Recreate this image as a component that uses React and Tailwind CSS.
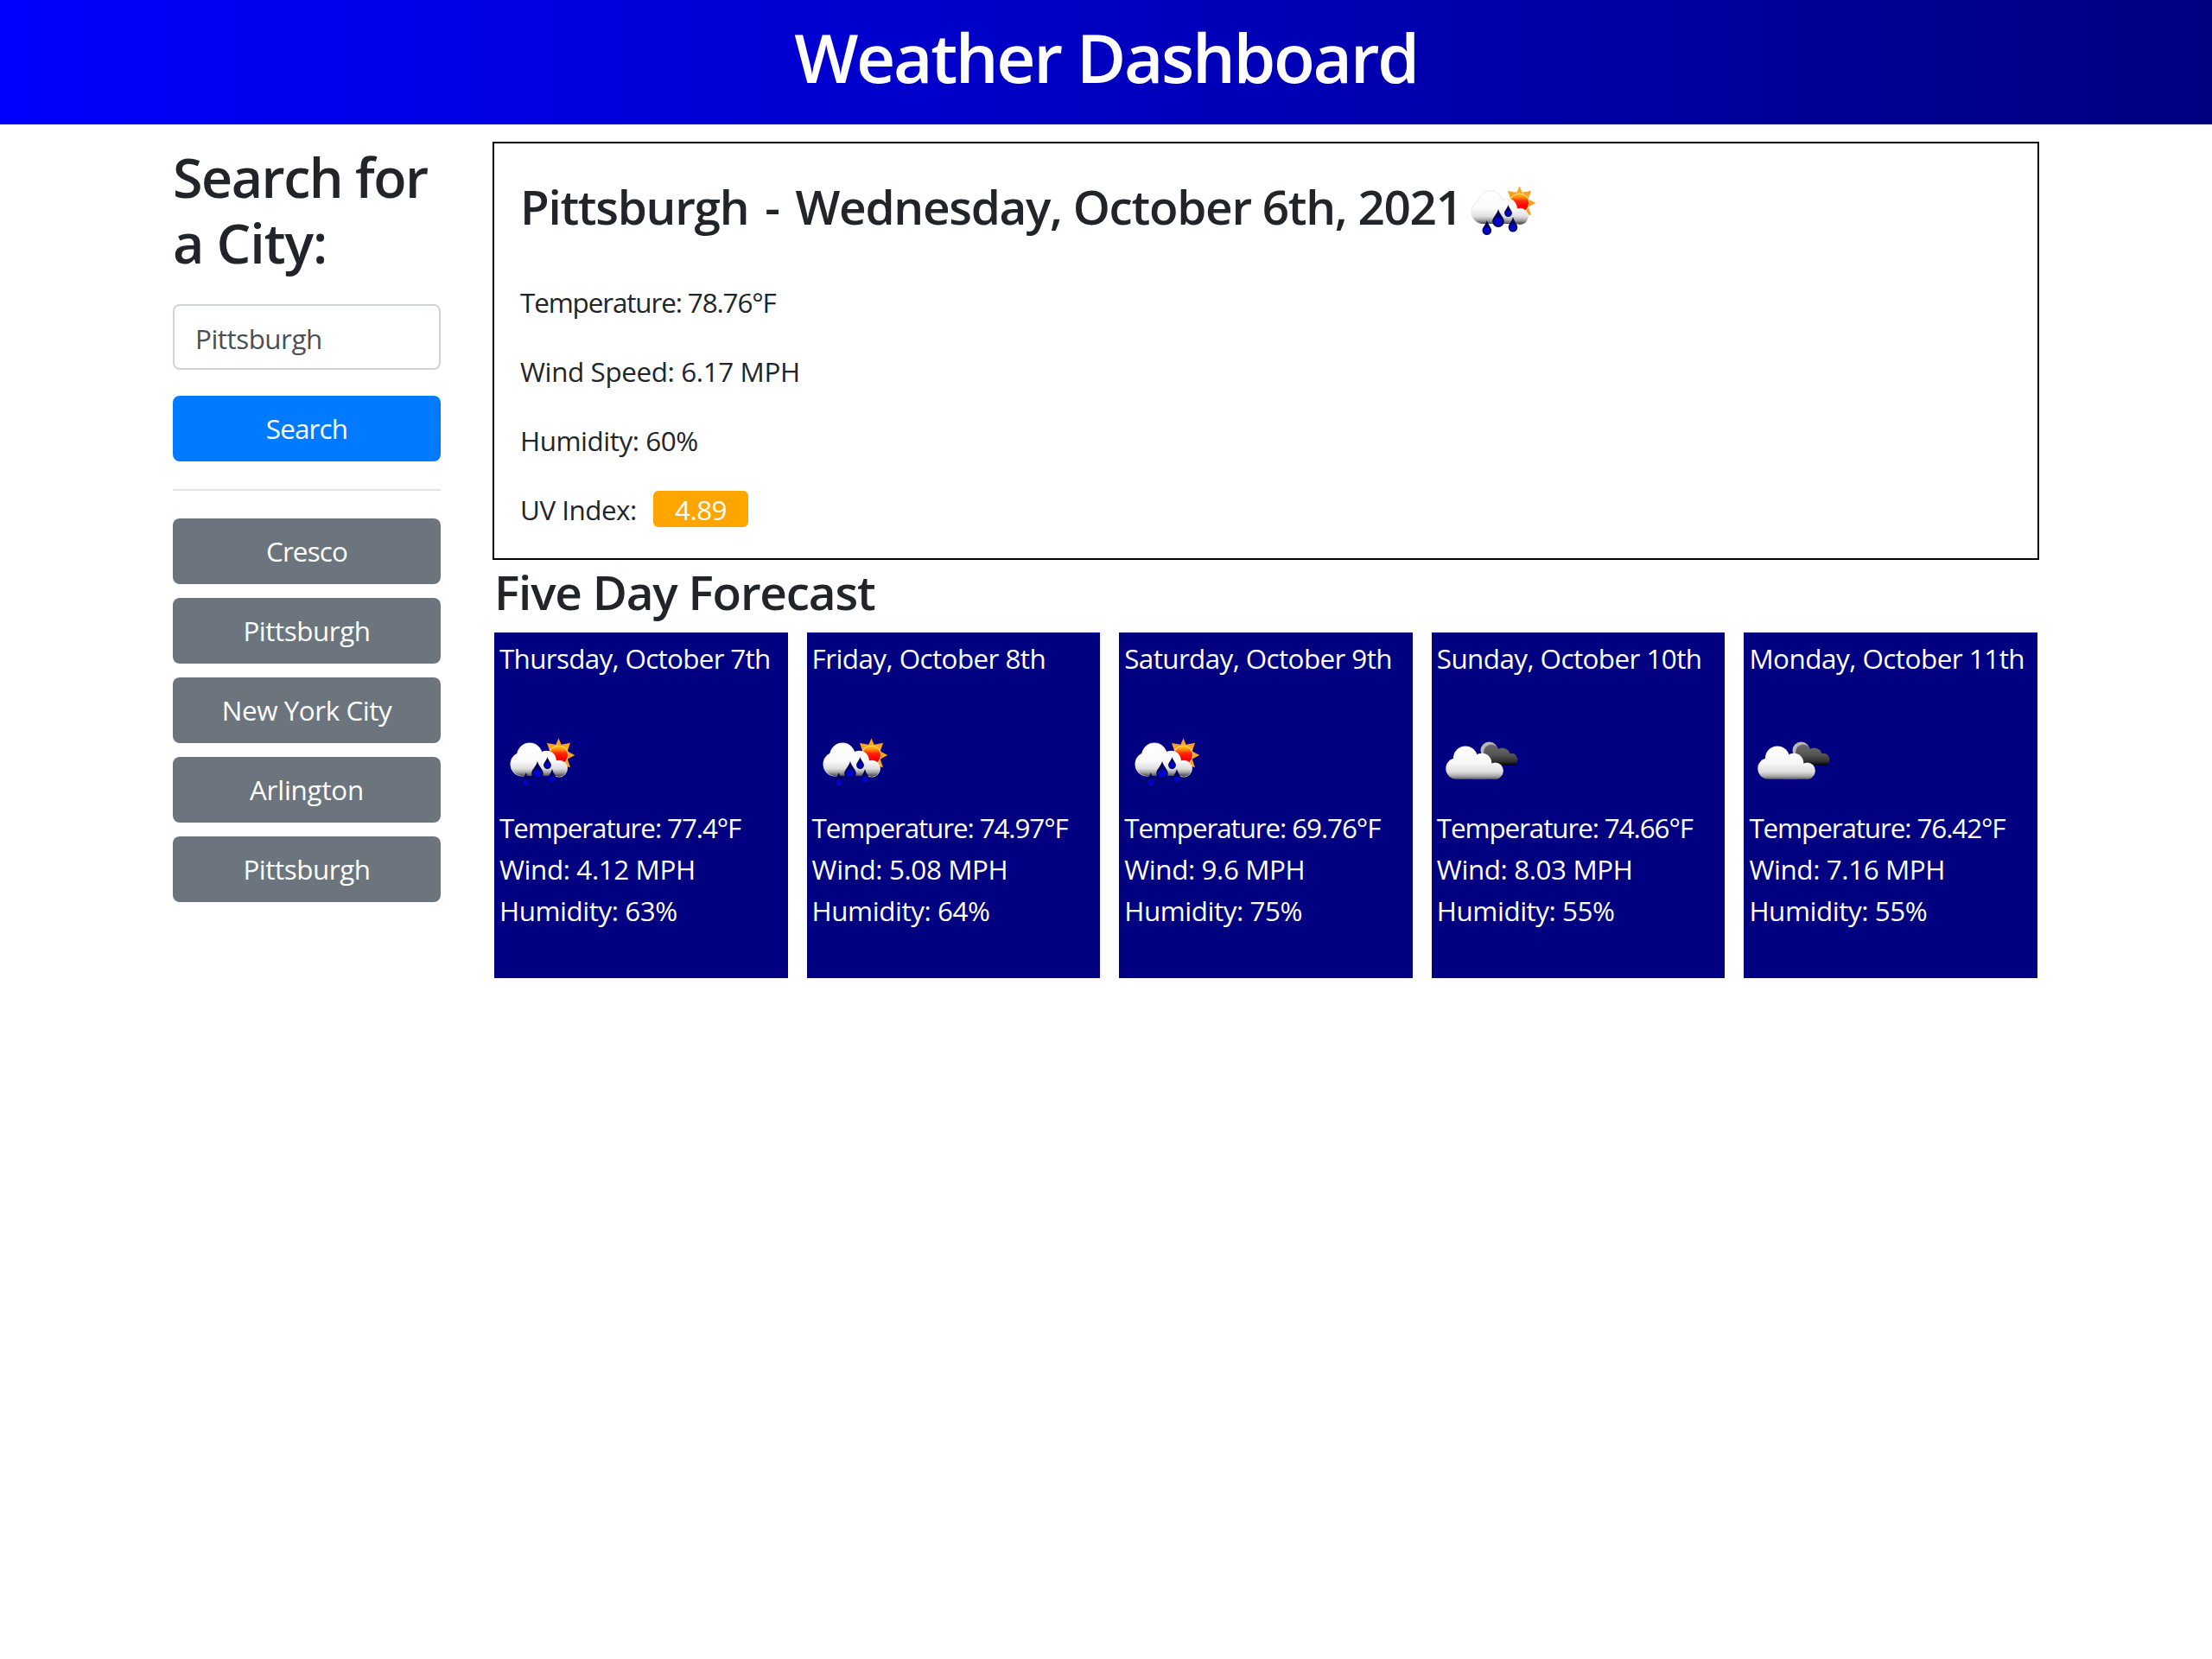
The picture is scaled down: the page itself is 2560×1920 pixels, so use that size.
const history = [
  { name: "Cresco", tracking: "tracking-[-0.84px]" },
  { name: "Pittsburgh", tracking: "tracking-[-0.45px]" },
  { name: "New York City", tracking: "tracking-[-0.45px]" },
  { name: "Arlington", tracking: "tracking-[-0.24px]" },
  { name: "Pittsburgh", tracking: "tracking-[-0.45px]" },
];

const forecast = [
  { date: "Thursday, October 7th", icon: "rain", temp: "77.4", wind: "4.12", humidity: 63, tracking: "tracking-[-0.68px]" },
  { date: "Friday, October 8th", icon: "rain", temp: "74.97", wind: "5.08", humidity: 64, tracking: "tracking-[-0.57px]" },
  { date: "Saturday, October 9th", icon: "rain", temp: "69.76", wind: "9.6", humidity: 75, tracking: "tracking-[-0.6px]" },
  { date: "Sunday, October 10th", icon: "clouds", temp: "74.66", wind: "8.03", humidity: 55, tracking: "tracking-[-0.57px]" },
  { date: "Monday, October 11th", icon: "clouds", temp: "76.42", wind: "7.16", humidity: 55, tracking: "tracking-[-0.5px]" },
];

function Drop({ x, top, bottom, r }) {
  const cy = bottom - r;
  const d = `M${x} ${top}C${x + r * 0.3} ${top + (cy - top) * 0.5} ${x + r} ${cy - r * 0.7} ${x + r} ${cy}A${r} ${r} 0 0 1 ${x - r} ${cy}C${x - r} ${cy - r * 0.7} ${x - r * 0.3} ${top + (cy - top) * 0.5} ${x} ${top}Z`;
  return (
    <>
      <path d={d} fill="#00005c" />
      <circle cx={x} cy={cy} r={r * 0.68} fill="#0000cc" />
    </>
  );
}

function RainIcon({ id, className }) {
  const cloud = `url(#${id}-cloud)`;
  return (
    <svg viewBox="8 4 100 100" className={className} aria-hidden="true">
      <defs>
        <linearGradient id={`${id}-cloud`} gradientUnits="userSpaceOnUse" x1="0" y1="30" x2="0" y2="68">
          <stop offset="0" stopColor="#ffffff" />
          <stop offset="0.55" stopColor="#fafafa" />
          <stop offset="0.78" stopColor="#dedede" />
          <stop offset="0.9" stopColor="#a0a0a0" />
          <stop offset="1" stopColor="#4c4c4c" />
        </linearGradient>
        <linearGradient id={`${id}-sun`} gradientUnits="userSpaceOnUse" x1="0" y1="32" x2="0" y2="48">
          <stop offset="0" stopColor="#ffd21c" />
          <stop offset="0.3" stopColor="#ff9a10" />
          <stop offset="0.6" stopColor="#ff2a00" />
          <stop offset="1" stopColor="#ff0000" />
        </linearGradient>
        <filter id={`${id}-soft`} x="-10%" y="-10%" width="120%" height="120%">
          <feGaussianBlur stdDeviation="0.7" />
        </filter>
      </defs>
      <g filter={`url(#${id}-soft)`}>
        <path
          d="M76.5 24.5L79.7 31.8L90 29.8L86.8 39.5L95.3 44L86.8 48.5L90 58L78 56L64 44L66.3 39.5L63 30L73.3 31.8Z"
          fill="#fca21c"
        />
        <circle cx="76.5" cy="44" r="11.6" fill="#ffdc90" />
        <circle cx="76.5" cy="44" r="10.6" fill={`url(#${id}-sun)`} />
        <g fill="#e4e4e4">
          <circle cx="43" cy="44.5" r="14.9" />
          <circle cx="34.5" cy="54.5" r="14" />
          <circle cx="62.5" cy="50" r="11.3" />
          <circle cx="77" cy="59.6" r="9.9" />
        </g>
        <g fill={cloud}>
          <circle cx="43" cy="44.5" r="14.3" />
          <circle cx="34.5" cy="54.5" r="13.4" />
          <circle cx="62.5" cy="50" r="10.8" />
          <circle cx="77" cy="59.6" r="9.3" />
          <rect x="28" y="48" width="48" height="20" rx="8" />
        </g>
        <Drop x={52} top={51} bottom={72} r={6.8} />
        <Drop x={63.5} top={46} bottom={60} r={4.4} />
        <Drop x={69} top={60} bottom={77.5} r={5.3} />
        <Drop x={38.8} top={64} bottom={81} r={5.3} />
      </g>
    </svg>
  );
}

function CloudsIcon({ id, className }) {
  return (
    <svg viewBox="12 4 100 100" className={className} aria-hidden="true">
      <defs>
        <linearGradient id={`${id}-front`} gradientUnits="userSpaceOnUse" x1="0" y1="34" x2="0" y2="72">
          <stop offset="0" stopColor="#ffffff" />
          <stop offset="0.5" stopColor="#f8f8f8" />
          <stop offset="0.78" stopColor="#dcdcdc" />
          <stop offset="0.9" stopColor="#a8a8a8" />
          <stop offset="1" stopColor="#5e5e5e" />
        </linearGradient>
        <linearGradient id={`${id}-back`} gradientUnits="userSpaceOnUse" x1="0" y1="29" x2="0" y2="56">
          <stop offset="0" stopColor="#707070" />
          <stop offset="0.55" stopColor="#545454" />
          <stop offset="0.8" stopColor="#333333" />
          <stop offset="1" stopColor="#000000" />
        </linearGradient>
        <filter id={`${id}-soft`} x="-10%" y="-10%" width="120%" height="120%">
          <feGaussianBlur stdDeviation="0.7" />
        </filter>
      </defs>
      <g filter={`url(#${id}-soft)`}>
        <circle cx="72.5" cy="38.5" r="10" fill="#b8b8b8" />
        <g fill={`url(#${id}-back)`}>
          <circle cx="75" cy="40.5" r="9" />
          <circle cx="87.5" cy="45" r="9.6" />
          <circle cx="99" cy="49.5" r="6.6" />
          <rect x="70" y="42" width="34" height="14" rx="5" />
        </g>
        <g fill={`url(#${id}-front)`}>
          <circle cx="45" cy="47.5" r="14" />
          <circle cx="34.5" cy="59.5" r="12.2" />
          <circle cx="64" cy="53" r="11.3" />
          <circle cx="79.5" cy="62" r="9.4" />
          <rect x="29" y="50" width="46" height="21.7" rx="9" />
          <rect x="50" y="60" width="36" height="11.7" rx="5" />
        </g>
      </g>
    </svg>
  );
}

function ForecastCard({ day, index }) {
  return (
    <article className="h-[400px] overflow-hidden bg-[#000080] px-1.5 pt-1.5 whitespace-nowrap text-white">
      <p className={day.tracking}>{day.date}</p>
      <div className="pt-12">
        {day.icon === "rain" ? (
          <RainIcon id={`day${index}`} className="size-[100px]" />
        ) : (
          <CloudsIcon id={`day${index}`} className="size-[100px]" />
        )}
      </div>
      <p className="tracking-[-1.1px]">{`Temperature: ${day.temp}°F`}</p>
      <p className="tracking-[-0.4px]">{`Wind: ${day.wind} MPH`}</p>
      <p className="tracking-[-0.45px]">{`Humidity: ${day.humidity}%`}</p>
    </article>
  );
}

export default function App() {
  return (
    <div className="min-h-screen bg-white font-['Open_Sans',sans-serif] text-[31.4px] leading-[48px] text-[#212529]">
      <header className="h-36 bg-[linear-gradient(to_right,#0000ff,#000080)] pt-[18px] text-center">
        <h1 className="text-[78.5px] leading-[96px] font-semibold tracking-[-2.36px] text-white">Weather Dashboard</h1>
      </header>

      <main className="flex pl-[200px]">
        <aside className="w-[310px] pt-[23px]">
          <h2 className="text-[62.8px] leading-[76px] font-semibold tracking-[-1.52px]">
            Search for
            <br />
            <span className="tracking-[-1.1px]">a City:</span>
          </h2>
          <input
            type="text"
            defaultValue="Pittsburgh"
            className="mt-[33px] block h-[76px] w-full rounded-lg border-2 border-[#ced4da] bg-white px-6 pt-[3px] tracking-[-0.5px] text-[#495057]"
          />
          <button className="mt-[30px] block h-[76px] w-full rounded-lg bg-[#007bff] tracking-[-0.83px] text-white">
            Search
          </button>
          <hr className="mt-8 mb-8 border-t-2 border-[#e5e5e5]" />
          <div className="flex flex-col gap-4">
            {history.map((city, i) => (
              <button key={i} className={`h-[76px] w-full rounded-lg bg-[#6c757d] text-white ${city.tracking}`}>
                {city.name}
              </button>
            ))}
          </div>
        </aside>

        <div className="ml-[60px] w-[1790px] pt-5">
          <section className="h-[484px] border-2 border-black px-[30px] pt-[29px]">
            <div className="flex h-[100px] items-center">
              <h3 className="w-[1088px] pb-3 text-[54.9px] leading-[68px] font-semibold tracking-[-1.3px] whitespace-nowrap">
                Pittsburgh <span className="px-1.5">-</span> Wednesday, October 6th, 2021
              </h3>
              <RainIcon id="today" className="size-[100px]" />
            </div>
            <div className="flex flex-col gap-8 pt-[31px]">
              <p className="tracking-[-1.12px]">Temperature: 78.76°F</p>
              <p className="tracking-[-0.38px]">Wind Speed: 6.17 MPH</p>
              <p className="tracking-[-0.45px]">Humidity: 60%</p>
              <div className="flex items-start">
                <p className="w-[154px] tracking-[-0.5px]">UV Index:</p>
                <span className="mt-0.5 h-[42px] w-[110px] rounded-md bg-[#ffa500] pt-px text-center leading-[42px] tracking-[-0.5px] text-white">
                  4.89
                </span>
              </div>
            </div>
          </section>

          <h3 className="mt-[3px] pl-0.5 text-[54.9px] leading-[68px] font-semibold tracking-[-1.21px]">
            Five Day Forecast
          </h3>
          <section className="mx-0.5 mt-[13px] grid grid-cols-5 gap-[22px]">
            {forecast.map((day, i) => (
              <ForecastCard key={day.date} day={day} index={i} />
            ))}
          </section>
        </div>
      </main>
    </div>
  );
}
